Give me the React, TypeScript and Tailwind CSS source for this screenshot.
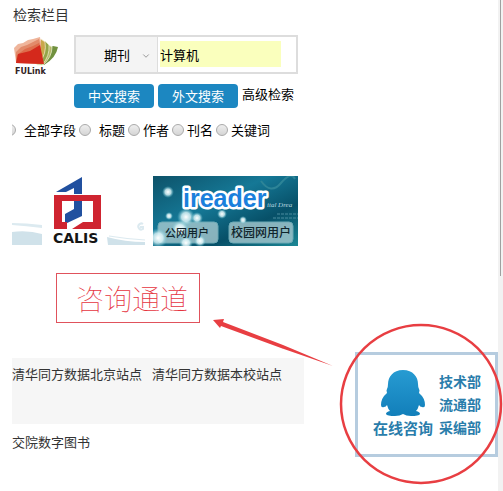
import React, { useState } from 'react';
import { ChevronDown } from 'lucide-react';

const fields = ['全部字段', '标题', '作者', '刊名', '关键词'];
const departments = ['技术部', '流通部', '采编部'];

const FuLinkLogo: React.FC = () => (
  <svg className="block h-10 w-[46px]" viewBox="0 0 46 40" role="img" aria-label="FULink">
    <path d="M26 30 37 14l4-3 5 1q-2 11-14 18Z" fill="#71913f" />
    <path d="M25 30 35 9l5 3q0 10-9 18Z" fill="#b4b968" stroke="#f4f3d8" strokeWidth="0.7" />
    <path d="M24 29 33 6l4 4q1 11-7 20Z" fill="#93a548" stroke="#f4f3d8" strokeWidth="0.7" />
    <path d="M22 28 29 4l4 3q2 12-6 21Z" fill="#c9a84a" stroke="#f7ecd0" strokeWidth="0.7" />
    <path d="M2 13 6 9l5-1 5-3 5-1 7-2q3 13-2 25H4Z" fill="#efb59b" />
    <path d="m4 17 5-5 6-2 12-6q4 12-1 24H4Z" fill="#e28a6a" />
    <path d="m5 20 8-6 8-3 6-3q4 11 1 21L4 28Z" fill="#de6c4b" />
    <path d="m6 19 12-3 10-6 4 19-28-1Z" fill="#d4291c" />
    <text x="3" y="39" fontFamily="DejaVu Sans, sans-serif" fontWeight="bold" fontSize="8" fill="#332424">FULink</text>
  </svg>
);

const CalisBanner: React.FC = () => (
  <svg className="block h-[71px] w-[141px]" viewBox="0 0 141 71" role="img" aria-label="CALIS">
    <path d="M0 47q14 0 30 2v3Q14 50 0 49Z" fill="#dceaf0" />
    <path d="M0 56q16-2 30 2v11H0Z" fill="#d0e2ea" />
    <path d="M95 61q18 5 38 5v3H96Z" fill="#d0e2ea" />
    <path d="M97 60q18 3 36 4" fill="none" stroke="#dceaf0" />
    <path d="M131 48a3 3 0 1 0 0 5v-2h-3" fill="none" stroke="#dceaf0" strokeWidth="2" />
    <path d="M44 16 70 1v17h-8v-6l-8 4Z" fill="#21509f" />
    <path d="M70 23v17L53 48V38l9-5V23Z" fill="#21509f" />
    <path d="M42 19h47v34H60l11-7h10V25H50v21h5v7H42Z" fill="#cf2430" />
    <text x="41" y="67" fontFamily="DejaVu Sans, sans-serif" fontWeight="bold" fontSize="14" fill="#151515">CALIS</text>
  </svg>
);

const IreaderBanner: React.FC = () => (
  <svg className="block h-[70px] w-[145px]" viewBox="0 0 145 70" role="img" aria-label="ireader">
    <defs>
      <linearGradient id="sea" x1="0" y1="0" x2="1" y2="1">
        <stop offset="0" stopColor="#0d5269" />
        <stop offset="0.4" stopColor="#157896" />
        <stop offset="0.7" stopColor="#075068" />
        <stop offset="1" stopColor="#1c8795" />
      </linearGradient>
      <radialGradient id="bubble">
        <stop offset="0" stopColor="#fff" />
        <stop offset="0.5" stopColor="#dff7fa" stopOpacity="0.8" />
        <stop offset="1" stopColor="#5bbacb" stopOpacity="0" />
      </radialGradient>
    </defs>
    <rect width="145" height="70" fill="url(#sea)" />
    <path d="M108 5q10 14 20 2t14-4" fill="none" stroke="#2d8497" strokeWidth="2" />
    <text x="114" y="31" fontFamily="Liberation Serif, serif" fontStyle="italic" fontSize="7" fill="#b9d9e0">ital Drea</text>
    <path d="M124 38h21M120 42h25" stroke="#4a8c9f" strokeDasharray="3 1" />
    <g fill="#a8c9d0" fillOpacity="0.8" stroke="#6ca9b5">
      <rect x="5" y="46" width="60" height="21" rx="4" />
      <rect x="76" y="46" width="64" height="21" rx="4" />
    </g>
    <g fill="url(#bubble)">
      <circle cx="15" cy="16" r="6" />
      <circle cx="16" cy="40" r="4" />
      <circle cx="33" cy="41" r="9" />
      <circle cx="44" cy="42" r="6" />
      <circle cx="5" cy="62" r="10" />
      <circle cx="27" cy="53" r="9" />
      <circle cx="33" cy="67" r="7" />
      <circle cx="47" cy="65" r="6" />
      <circle cx="69" cy="38" r="5" />
      <circle cx="90" cy="44" r="4" />
    </g>
    <text x="30" y="31" fontFamily="Liberation Sans, sans-serif" fontWeight="bold" fontSize="25" fill="#1a80dc" stroke="#fff" strokeWidth="5" strokeLinejoin="round" paintOrder="stroke">ireader</text>
    <g fontFamily="Noto Sans CJK SC, sans-serif" fontWeight="500" fill="#10252c">
      <text x="12" y="61" fontSize="11">公网用户</text>
      <text x="78" y="61" fontSize="12">校园网用户</text>
    </g>
  </svg>
);

const Penguin: React.FC = () => (
  <svg className="block h-[46px] w-[46px]" viewBox="0 0 46 46" aria-hidden="true">
    <defs>
      <linearGradient id="penguin" x1="0" y1="0" x2="0" y2="1">
        <stop offset="0" stopColor="#279bd2" />
        <stop offset="1" stopColor="#127fba" />
      </linearGradient>
    </defs>
    <path
      d="M23 0C13 0 8 7 8 14q0 3-1 5-1 1 0 4-6 5-6 12 0 3 3 2 2 0 3-2 1 4 3 6-4 1-4 3 1 2 9 2 5 0 8-2 3 2 8 2 8 0 9-2 0-2-4-3 2-2 3-6 1 2 3 2 3 1 3-2 0-7-6-12 1-3 0-4-1-2-1-5C38 7 33 0 23 0Z"
      fill="url(#penguin)"
    />
  </svg>
);

const App: React.FC = () => {
  const [keyword, setKeyword] = useState('计算机');

  return (
    <div className="relative flex min-h-screen bg-white font-['Noto_Sans_CJK_SC',sans-serif] text-[13px] leading-5 text-black">
      <main className="ml-3 min-w-0 flex-1 overflow-hidden">
        <h1 className="pt-1 pl-px text-sm leading-5 text-[#333]">检索栏目</h1>

        {/* Search */}
        <form className="mt-[11px]" onSubmit={(e) => e.preventDefault()}>
          <div className="flex gap-4">
            <FuLinkLogo />
            <div>
              <div className="flex h-[39px] w-56 border-2 border-[#ddd]">
                <div className="relative w-[82px] border-r border-[#ddd] bg-[#f4f4f4]">
                  <select aria-label="类型" className="h-full w-full appearance-none pl-7 outline-none">
                    <option>期刊</option>
                    <option>图书</option>
                  </select>
                  <ChevronDown className="pointer-events-none absolute top-3.5 right-1.5 h-2.5 w-2.5 text-[#888]" />
                </div>
                <input
                  aria-label="检索词"
                  value={keyword}
                  onChange={(e) => setKeyword(e.target.value)}
                  className="mt-1 ml-0.5 h-[26px] w-[121px] bg-[#faffbd] outline-none"
                />
              </div>
              <div className="mt-2.5 flex gap-1">
                <button type="submit" className="h-6 w-20 rounded bg-[#1c87c1] leading-6 text-white">中文搜索</button>
                <button type="submit" className="h-6 w-20 rounded bg-[#1c87c1] leading-6 text-white">外文搜索</button>
                <a href="#advanced" className="whitespace-nowrap">高级检索</a>
              </div>
            </div>
          </div>

          <div className="mt-3 -ml-2 flex gap-[3px]">
            {fields.map((field, i) => (
              <label key={field} className={i < 2 ? 'flex items-center gap-2' : 'flex items-center gap-[3px]'}>
                <input
                  type="radio"
                  name="field"
                  className="h-3 w-3 appearance-none rounded-full border border-[#aaa] bg-linear-to-b from-[#eee] to-[#d5d5d5]"
                />
                {field}
              </label>
            ))}
          </div>
        </form>

        <div className="mt-9 flex">
          <a href="#calis"><CalisBanner /></a>
          <a href="#ireader"><IreaderBanner /></a>
        </div>

        <div className="mt-[26px] ml-11 w-36 border border-[#e0525c] pl-[19px] text-[28px] leading-12 font-thin text-[#e5343f]">
          咨询通道
        </div>

        {/* Databases */}
        <div className="mt-[35px] flex h-[66px] w-[292px] gap-2.5 bg-[#f6f6f6] pt-1.5 text-[#333]">
          <a href="#beijing">清华同方数据北京站点</a>
          <a href="#campus">清华同方数据本校站点</a>
        </div>
        <a href="#books" className="mt-2 block text-[#333]">交院数字图书</a>
      </main>

      {/* Scroll track */}
      <div className="w-[5px] bg-[#f2f2f2]">
        <div className="ml-0.5 h-[276px] w-px bg-[#a0a0a0]" />
      </div>

      {/* Floating consultation panel */}
      <aside className="absolute top-[352px] right-[5px] flex h-[105px] w-[143px] gap-1.5 border-3 border-[#b6ccdf] bg-white pt-[15px] pl-[15px] text-sm font-bold text-[#2a7dab]">
        <a href="#consult" className="flex flex-col items-center text-[15px] whitespace-nowrap">
          <Penguin />
          <span className="leading-6">在线咨询</span>
        </a>
        <ul className="leading-[23px]">
          {departments.map((name) => (
            <li key={name} className="whitespace-nowrap">
              <a href="#department">{name}</a>
            </li>
          ))}
        </ul>
      </aside>

      {/* Hand-drawn marks over the page */}
      <svg className="pointer-events-none absolute top-[310px] right-0 h-[181px] w-[303px]" viewBox="0 0 303 181" aria-hidden="true">
        <ellipse cx="221" cy="94" rx="80" ry="79" fill="none" stroke="#e83e42" strokeWidth="2.5" />
        <path d="m13 10 11-1-1 3 60 23 50 21-52-18-60-22-1 2Z" fill="#e83e42" />
      </svg>
    </div>
  );
};

export default App;
